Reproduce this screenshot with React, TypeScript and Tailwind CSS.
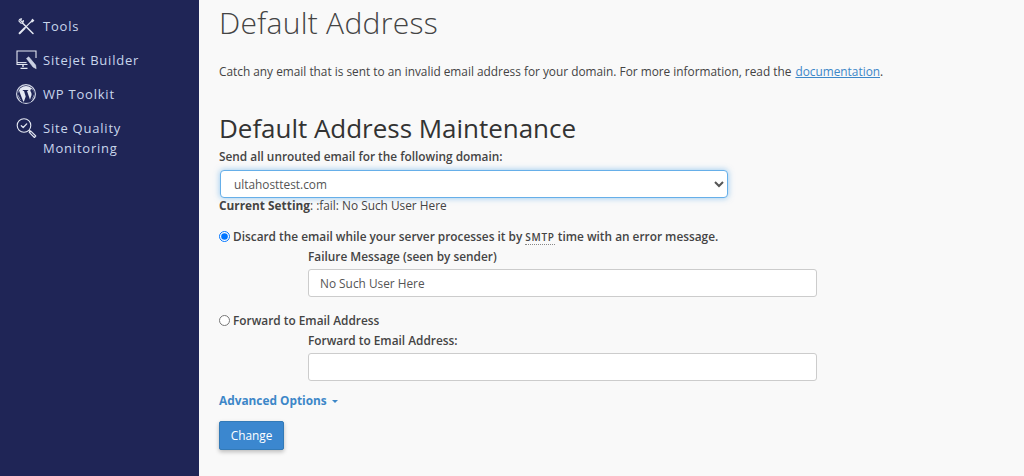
import React from "react";

function ToolsIcon() {
  return (
    <svg width="17" height="17" viewBox="0 0 17 17" fill="none" stroke="#e4e8f2" strokeWidth="1.2" strokeLinecap="round" strokeLinejoin="round" className="mt-[2px] ml-[2px]">
      <path d="M1.6 15.2 L6.6 10.2" strokeWidth="2" />
      <path d="M6.6 10.2 L13.4 3.4" />
      <path d="M13.4 3.4 L14.4 1.4 L15.7 2.6 L13.9 3.9" />
      <path d="M1 3.2 C0.9 1.8 2 0.7 3.6 0.8 L2.6 2.5 L3.8 3.7 L5.5 2.6 C5.6 4.3 4.3 5.5 2.9 5.2 L1 3.2 Z" strokeWidth="1.1" />
      <path d="M4.5 5 L15 15.5" strokeWidth="1.5" />
    </svg>
  );
}

function MonitorIcon() {
  return (
    <svg width="21" height="21" viewBox="0 0 21 21" fill="none" stroke="#e4e8f2" strokeWidth="1.1">
      <path d="M11.5 14.5 H1 V1 H20 V8" />
      <path d="M1 12.6 H10.5" />
      <path d="M7 15 V17 M4.5 18.4 H11.5" strokeWidth="1.4" />
      <path d="M10.5 8.5 L12.7 6.8 L19.6 15 L20.2 18.7 L17 17 Z" fill="#c9d0e3" stroke="#e4e8f2" strokeWidth="0.5" />
    </svg>
  );
}

function WpIcon() {
  return (
    <svg width="20" height="20" viewBox="0 0 20 20">
      <circle cx="10" cy="10" r="10" fill="#d5dae8" />
      <circle cx="10" cy="10" r="8.8" fill="#1f2556" />
      <circle cx="10" cy="10" r="8" fill="#e4e8f2" />
      <path d="M3 6.5 L7.6 18.5 L9.7 12.4 L8 7 L6.8 6.8 V6.1 H12.2 V6.8 L11 7 L14 15.8 L15.4 11.4 C16 9.4 15.2 8.4 14.6 7.4 C14 6.3 14.5 5 15.6 4.9 L17.5 7 L18.2 10 L14.5 18.5 H6 L1.8 10 Z" fill="#1f2556" />
    </svg>
  );
}

function QualityIcon() {
  return (
    <svg width="21" height="21" viewBox="0 0 21 21" fill="none" stroke="#e4e8f2" strokeWidth="1.1" strokeLinecap="round" strokeLinejoin="round">
      <circle cx="8" cy="7.5" r="6.8" />
      <path d="M5.3 7.8 L7.2 9.5 L10.7 5.9" strokeWidth="1.3" />
      <path d="M13 12.5 L14.4 13.9" />
      <path d="M14.6 12.9 L19.8 18 L18.4 19.5 L13.2 14.4 Z" />
    </svg>
  );
}

function NavItem({ icon, children }: { icon: React.ReactNode; children: React.ReactNode }) {
  return (
    <div className="flex items-start">
      <div className="w-[43px] pl-[16px] shrink-0 flex justify-start">{icon}</div>
      <div className="text-[13px] leading-[20px] tracking-[0.78px] font-medium text-[#c9d6ec]">{children}</div>
    </div>
  );
}

export default function App() {
  return (
    <div className="flex w-[1024px] h-[476px] overflow-hidden bg-[#f9f9f9] text-[#444] text-[11.85px] font-['Open_Sans',sans-serif]">
      <aside className="w-[199px] shrink-0 bg-[#1f2556] pt-[16px] flex flex-col gap-[14px]">
        <NavItem icon={<ToolsIcon />}>Tools</NavItem>
        <NavItem icon={<MonitorIcon />}>Sitejet Builder</NavItem>
        <div className="-mt-[1px]">
          <NavItem icon={<WpIcon />}>WP Toolkit</NavItem>
        </div>
        <NavItem icon={<QualityIcon />}>
          Site Quality
          <br />
          Monitoring
        </NavItem>
      </aside>
      <main className="flex-1 pl-[20px] min-w-0">
        <h1 className="text-[30px] leading-[40px] font-light text-[#444] tracking-[0.28px] mt-[3px]">Default Address</h1>
        <p className="mt-[20px] leading-[17px] text-[#444]">
          Catch any email that is sent to an invalid email address for your domain. For more information, read the{" "}
          <a className="ml-[1px] text-[#3d87c8] underline">documentation</a>.
        </p>
        <h2 className="mt-[33px] text-[26px] leading-[30px] text-[#333] font-normal tracking-[-0.03px]">Default Address Maintenance</h2>
        <label className="block mt-[5px] leading-[17px] font-semibold text-[#444]">Send all unrouted email for the following domain:</label>
        <div className="mt-[5px] ml-[1px] w-[508px] h-[28px]">
          <select
            defaultValue="ultahosttest.com"
            className="w-full h-full bg-white rounded-[4px] border border-[#66afe9] shadow-[0_0_6px_rgba(102,175,233,0.7)] pl-[9px] text-[11.85px] text-[#555] outline-none"
          >
            <option>ultahosttest.com</option>
          </select>
        </div>
        <div className="leading-[15px]">
          <b className="font-bold">Current Setting</b>: :fail: No Such User Here
        </div>
        <div className="mt-[15px] flex items-center h-[17px] font-semibold">
          <input type="radio" defaultChecked name="r" className="w-[11px] h-[11px] mr-[3px] accent-[#0075ff]" />
          <span>
            Discard the email while your server processes it by{" "}
            <abbr className="text-[10px] tracking-[0.7px] no-underline border-b border-dotted border-[#888]">SMTP</abbr> time with an error message.
          </span>
        </div>
        <div className="pl-[89px]">
          <label className="block mt-[3px] leading-[17px] font-semibold">Failure Message (seen by sender)</label>
          <input
            readOnly
            value="No Such User Here"
            className="block mt-[4px] w-[509px] h-[28px] bg-white border border-[#ccc] rounded-[3px] px-[11px] text-[11.85px] text-[#555] outline-none"
          />
        </div>
        <div className="mt-[15px] flex items-center h-[17px] font-semibold">
          <input type="radio" name="r" className="w-[11px] h-[11px] mr-[3px]" />
          <span>Forward to Email Address</span>
        </div>
        <div className="pl-[89px]">
          <label className="block mt-[3px] leading-[17px] font-semibold">Forward to Email Address:</label>
          <input className="block mt-[4px] w-[509px] h-[28px] bg-white border border-[#ccc] rounded-[3px] px-[11px] outline-none" />
        </div>
        <div className="mt-[11px] leading-[17px] font-bold text-[#3d87c8] flex items-center">
          Advanced Options
          <span className="ml-[5px] mt-[2px] w-0 h-0 border-x-[3px] border-x-transparent border-t-[3px] border-t-[#3d87c8]" />
        </div>
        <button className="block mt-[12px] w-[65px] h-[29px] bg-[#3b87cf] border border-[#337ab7] rounded-[2px] text-white text-[11.85px] shadow-[0_2px_4px_rgba(0,0,0,0.25)]">
          Change
        </button>
      </main>
    </div>
  );
}
